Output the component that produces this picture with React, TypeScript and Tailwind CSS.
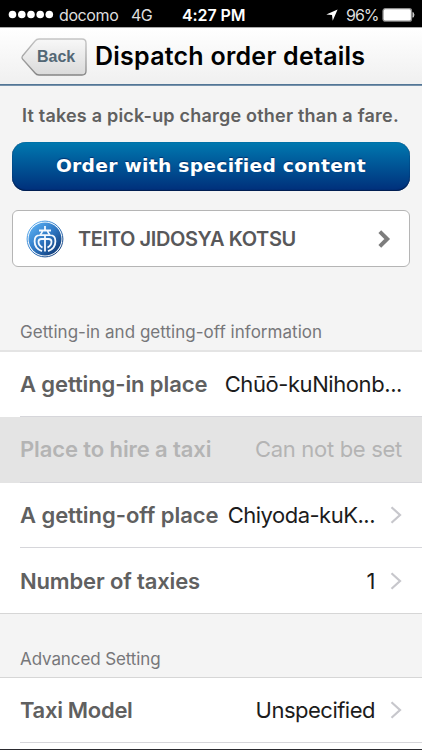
import React from "react";

function Chevron({ className }: { className?: string }) {
  return (
    <svg width="12" height="18" viewBox="0 0 12 18" fill="none" className={className}>
      <path d="M1.500 1.200 10 9 1.500 16.800" stroke="#c7c7cc" strokeWidth="2.200" />
    </svg>
  );
}

function StatusBar() {
  return (
    <div className="flex h-[27px] shrink-0 items-center bg-black pt-[2px] text-[16px] text-[#dedede]">
      <svg width="46" height="9" viewBox="0 0 46 9" className="ml-[8px] shrink-0" fill="#fff">
        <circle cx="4.5" cy="4.5" r="3.8" />
        <circle cx="13.8" cy="4.5" r="3.8" />
        <circle cx="23" cy="4.5" r="3.8" />
        <circle cx="32.2" cy="4.5" r="3.8" />
        <circle cx="41.3" cy="4.5" r="3.8" />
      </svg>
      <span className="ml-[5px] w-[72px] whitespace-nowrap tracking-[-0.4px]">docomo</span>
      <span className="w-[51px] whitespace-nowrap tracking-[-0.5px]">4G</span>
      <span className="w-[142px] whitespace-nowrap font-semibold tracking-[-0.1px] text-white">4:27 PM</span>
      <svg width="12" height="12" viewBox="0 0 12 12" className="ml-[2px] shrink-0" fill="#fff">
        <path d="M11.600.400 6.700 11.700 6 6 .300 5.400z" />
      </svg>
      <span className="ml-[8px] w-[36px] whitespace-nowrap tracking-[-1px]">96%</span>
      <svg width="34" height="14" viewBox="0 0 34 14" className="shrink-0">
        <rect x="1" y="0.700" width="28.500" height="12.400" rx="2.200" fill="#fff" stroke="#8c8c8c" strokeWidth="1.300" />
        <path d="M31 4.500q2 2.400 0 4.800z" fill="#ccc" stroke="#ccc" />
      </svg>
    </div>
  );
}

function Header() {
  return (
    <header className="flex h-[59px] shrink-0 items-center border-t border-[#aaa] bg-linear-to-b from-white to-[#efefef] shadow-[inset_0_-1px_0_#7792ab,inset_0_-2px_0_#527696]">
      <div className="relative ml-[21px] h-[39px] w-[66px] shrink-0">
        <svg width="66" height="39" viewBox="0 0 66 39" className="block">
          <defs>
            <linearGradient id="backFill" x1="0" y1="0" x2="0" y2="1">
              <stop offset="0" stopColor="#f8f8f8" />
              <stop offset="1" stopColor="#dadada" />
            </linearGradient>
            <linearGradient id="backEdge" x1="0" y1="0" x2="0" y2="1">
              <stop offset="0" stopColor="#c4c4c4" />
              <stop offset="1" stopColor="#858585" />
            </linearGradient>
          </defs>
          <path
            d="M18 1h43q4 0 4 4v28q0 4-4 4H18q-2.500 0-4-2L1.500 21q-1-1.500 0-3L14 3q1.500-2 4-2z"
            fill="url(#backFill)"
            stroke="url(#backEdge)"
            strokeWidth="1.300"
          />
        </svg>
        <span className="absolute left-[16px] top-[8px] font-['Liberation_Sans'] text-[16px] font-bold leading-[22px] text-[#536775]">
          Back
        </span>
      </div>
      <h1 className="ml-[8px] whitespace-nowrap text-[25px] font-semibold tracking-[0.24px] text-black">
        Dispatch order details
      </h1>
    </header>
  );
}

function CompanyLogo() {
  return (
    <svg width="38" height="38" viewBox="0 0 38 38" fill="none">
      <defs>
        <linearGradient id="emblem" x1="0.1" y1="0.1" x2="0.85" y2="0.9">
          <stop offset="0" stopColor="#58acf0" />
          <stop offset="0.5" stopColor="#2f78c4" />
          <stop offset="1" stopColor="#123f7d" />
        </linearGradient>
      </defs>
      <circle cx="19" cy="19" r="17.900" stroke="url(#emblem)" strokeWidth="1" />
      <circle cx="19" cy="19" r="16.500" fill="url(#emblem)" />
      <g stroke="#f4f9ff" strokeWidth="1.800">
        <path d="M19 6v4.500M13 10.500h12" />
        <path d="M16.300 11q-.300 2.200-2 3.700M21.700 11q.300 2.200 2 3.700" />
        <path d="M13.500 15.200h11M14 15.200c-4 0-5.400 2.800-5.400 6 0 4.700 3 8.400 7.400 10M24 15.200c4 0 5.400 2.800 5.400 6 0 4.700-3 8.400-7.400 10" />
        <path d="M19 15.400v16" />
        <path d="M19 19h-3.500q-3 0-3 2.800 0 3.800 4 5.800M19 19h3.500q3 0 3 2.800 0 3.800-4 5.800" />
      </g>
    </svg>
  );
}

function Section({ children, className }: { children: React.ReactNode; className: string }) {
  return (
    <h2 className={"flex items-end px-5 text-[17px] leading-[22px] text-[#77777a] whitespace-nowrap " + className}>
      {children}
    </h2>
  );
}

type RowProps = {
  label: string;
  value: string;
  labelClass?: string;
  valueClass?: string;
  className?: string;
  lineClass?: string;
  disabled?: boolean;
  chevron?: boolean;
};

function Row({
  label,
  value,
  labelClass = "tracking-[-0.1px]",
  valueClass = "tracking-[-0.5px]",
  className = "h-[65px]",
  lineClass = "border-b",
  disabled,
  chevron,
}: RowProps) {
  return (
    <div className={"shrink-0 pl-5 " + className + (disabled ? " bg-[#e4e4e4] text-[#b4b4b4]" : " bg-white")}>
      <div
        className={
          "flex h-full items-center justify-between border-[#d6d6da] pr-5 text-[22px] whitespace-nowrap " + lineClass
        }
      >
        <span className={"font-semibold " + (disabled ? "" : "text-[#606060] ") + labelClass}>{label}</span>
        <span className={"flex items-center " + (disabled ? "" : "text-[#1c1c1c] ") + valueClass}>
          {value}
          {chevron && <Chevron className="ml-[15px]" />}
        </span>
      </div>
    </div>
  );
}

export default function App() {
  return (
    <div className="flex h-[750px] w-[422px] flex-col overflow-hidden bg-[#f4f4f4] font-[Inter,sans-serif]">
      <StatusBar />
      <Header />
      <p className="mt-[16px] h-[26px] shrink-0 whitespace-nowrap pl-[22px] text-[18px] font-semibold leading-[27px] tracking-[0.21px] text-[#606060]">
        It takes a pick-up charge other than a fare.
      </p>
      <button className="mx-[12px] mt-[14px] flex h-[49px] shrink-0 items-center justify-center rounded-[14px] bg-linear-to-b from-[#0079b0] to-[#002e7a] font-['DejaVu_Sans'] text-[17px] font-bold whitespace-nowrap text-white shadow-[inset_0_-1px_1px_#001c4d,inset_0_0_1px_#003b6b] text-shadow-[0_-1px_1px_#00306e]">
        <span className="scale-x-[1.1] tracking-[0.25px] [font-variant-ligatures:none]">Order with specified content</span>
      </button>
      <div className="mx-[12px] mt-[19px] flex h-[57px] shrink-0 items-center rounded-[6px] border border-[#b5b5b5] bg-white pl-[13px] pr-[18px]">
        <CompanyLogo />
        <span className="ml-[14px] flex-1 whitespace-nowrap text-[20px] font-semibold tracking-[-0.38px] text-[#58585a]">
          TEITO JIDOSYA KOTSU
        </span>
        <svg width="14" height="18" viewBox="0 0 14 18" fill="none">
          <path d="M2.800 1.700 10.200 9l-7.400 7.300" stroke="#7d7d7d" strokeWidth="4" />
        </svg>
      </div>
      <Section className="h-[85px] shrink-0 border-b-2 border-[#e4e4e4] pb-[7px]">
        <span className="tracking-[0.03px]">Getting-in and getting-off information</span>
      </Section>
      <Row label="A getting-in place" value="Chūō-kuNihonb..." valueClass="tracking-[-0.42px]" />
      <Row
        label="Place to hire a taxi"
        value="Can not be set"
        valueClass="tracking-[-0.3px]"
        className="h-[66px]"
        disabled
      />
      <Row label="A getting-off place" value="Chiyoda-kuK..." labelClass="tracking-[-0.05px]" chevron />
      <Row label="Number of taxies" value="1" labelClass="tracking-[-0.15px]" chevron lineClass="pt-px" />
      <Section className="h-[65px] shrink-0 border-y border-[#d6d6d6] pb-[7px]">
        <span className="tracking-[-0.1px]">Advanced Setting</span>
      </Section>
      <Row label="Taxi Model" value="Unspecified" labelClass="tracking-[-0.3px]" chevron />
      <div className="h-[6px] shrink-0 bg-white" />
      <div className="h-px shrink-0 bg-[#2b2b30]" />
    </div>
  );
}
